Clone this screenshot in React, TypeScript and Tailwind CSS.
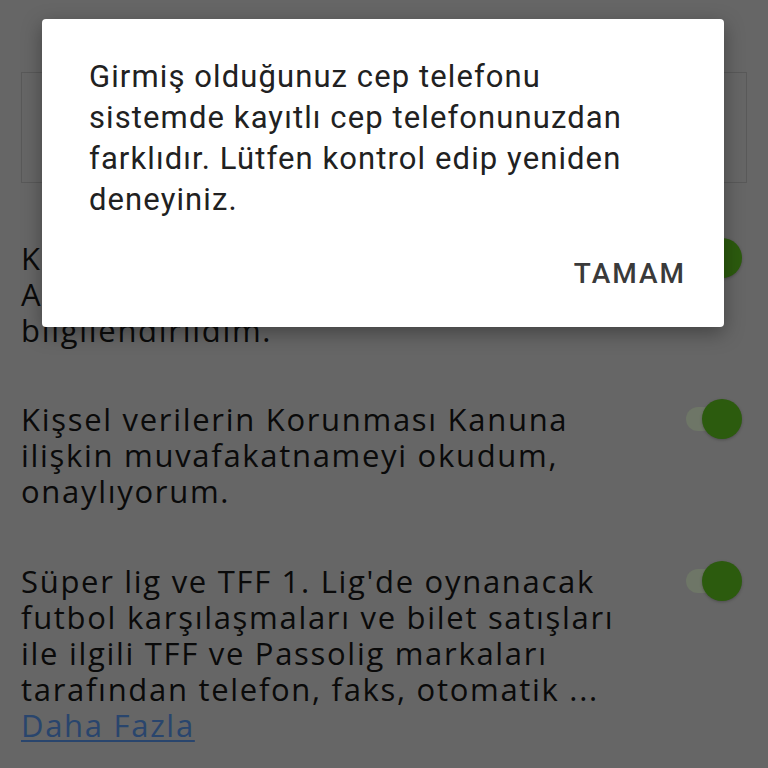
const rows = [
	{ top: "mt-[57px]", lines: ["K", "A", "bilgilendirildim."] },
	{ top: "mt-[53px]", lines: ["Kişsel verilerin Korunması Kanuna", "ilişkin muvafakatnameyi okudum,", "onaylıyorum."] },
	{
		top: "mt-[54px]",
		lines: [
			"Süper lig ve TFF 1. Lig'de oynanacak",
			"futbol karşılaşmaları ve bilet satışları",
			"ile ilgili TFF ve Passolig markaları",
			"tarafından telefon, faks, otomatik ...",
		],
		more: true,
	},
];

function Toggle() {
	return (
		<div className="relative w-[66px] h-[40px] flex items-center shrink-0">
			<div className="ml-[10px] w-[46px] h-[24px] rounded-full bg-[#6e7667]" />
			<div className="absolute right-0 top-0 w-[40px] h-[40px] rounded-full bg-[#2c5b0e] shadow-[0_1px_3px_rgba(0,0,0,0.25)]" />
		</div>
	);
}

export default function App() {
	return (
		<div className="relative w-[768px] h-[768px] overflow-hidden bg-[#666666] font-['Open_Sans','Noto_Sans',sans-serif] text-[#0a0a0a]">
			<div className="flex flex-col px-[21px]">
				<div className="h-[72px]" />
				<div className="h-[111px] border border-[#595959]" />

				{rows.map((row, i) => (
					<div key={i} className={`${row.top} flex items-start justify-between`}>
						<div className="text-[31px] leading-[36px] tracking-[1.7px]">
							{row.lines.map((l) => (
								<p key={l} className="whitespace-nowrap">{l}</p>
							))}
							{row.more && (
								<p className="text-[#29456d] underline decoration-[2px] underline-offset-[3px]">Daha Fazla</p>
							)}
						</div>
						<div className="-mt-[2px] mr-[5px]">
							<Toggle />
						</div>
					</div>
				))}
			</div>

			<div className="absolute left-[42px] top-[19px] w-[682px] h-[308px] bg-white rounded-[4px] shadow-[0_6px_20px_rgba(0,0,0,0.35)] flex flex-col font-['Roboto',sans-serif]">
				<p className="pl-[47px] pr-[30px] pt-[37px] text-[31px] leading-[41px] tracking-[1.1px] text-[#212121] whitespace-nowrap">
					Girmiş olduğunuz cep telefonu
					<br />
					sistemde kayıtlı cep telefonunuzdan
					<br />
					farklıdır. Lütfen kontrol edip yeniden
					<br />
					deneyiniz.
				</p>
				<div className="flex justify-end pr-[38px] mt-[37px]">
					<span className="text-[28px] leading-[34px] font-medium tracking-[2px] text-[#3a3a3a]">TAMAM</span>
				</div>
			</div>
		</div>
	);
}
